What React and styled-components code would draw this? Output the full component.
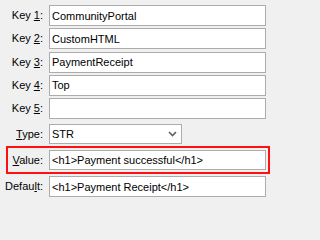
import React from 'react';
import styled, { createGlobalStyle } from 'styled-components';

const GlobalStyle = createGlobalStyle`
  html, body {
    margin: 0;
    padding: 0;
    background: #f0f0f0;
  }
  body {
    font-family: "Liberation Sans", Arial, sans-serif;
    font-size: 11px;
    color: #000;
  }
`;

const Form = styled.div`
  width: 271px;
  height: 202px;
  padding-top: 5px;
  box-sizing: border-box;
  display: flex;
  flex-direction: column;
  background: #f0f0f0;
`;

const Row = styled.div`
  display: grid;
  grid-template-columns: ${props => props.$labelWidth || 43}px 1fr;
  column-gap: 6px;
  align-items: center;
  margin-top: ${props => props.$mt || 0}px;
  padding-right: ${props => (props.$pr === undefined ? 5 : props.$pr)}px;
`;

const Label = styled.label`
  text-align: right;
  white-space: nowrap;
  line-height: 13px;
`;

const TextBox = styled.div`
  height: ${props => props.$h || 21}px;
  box-sizing: border-box;
  background: #fff;
  border: 1px solid #acacac;
  padding: 0 2px;
  display: flex;
  align-items: center;
  white-space: nowrap;
  overflow: hidden;
`;

const Combo = styled.div`
  width: 133px;
  height: 20px;
  box-sizing: border-box;
  background: #fff;
  border: 1px solid #acacac;
  padding: 0 4px 0 2px;
  display: flex;
  align-items: center;
  justify-content: space-between;
`;

const Highlight = styled.div`
  margin: 2px 1px 0 6px;
  border: 2px solid #ff1010;
  padding: 2px 2px 2px 0;
`;

const Chevron = () => (
  <svg width="9" height="6" viewBox="0 0 9 6">
    <polyline points="1,1 4.5,4.5 8,1" fill="none" stroke="#606060" strokeWidth="1.6" />
  </svg>
);

const keys = ['CommunityPortal', 'CustomHTML', 'PaymentReceipt', 'Top', ''];

const App = () => (
  <>
    <GlobalStyle />
    <Form>
      {keys.map((k, i) => (
        <Row key={i} $mt={i === 0 ? 0 : 2.25}>
          <Label>Key <u>{i + 1}</u>:</Label>
          <TextBox>{k}</TextBox>
        </Row>
      ))}
      <Row $mt={5}>
        <Label><u>T</u>ype:</Label>
        <Combo>
          <span>STR</span>
          <Chevron />
        </Combo>
      </Row>
      <Highlight>
        <Row $labelWidth={35} $pr={0}>
          <Label><u>V</u>alue:</Label>
          <TextBox $h={20}>&lt;h1&gt;Payment successful&lt;/h1&gt;</TextBox>
        </Row>
      </Highlight>
      <Row $mt={2}>
        <Label>Defau<u>l</u>t:</Label>
        <TextBox>&lt;h1&gt;Payment Receipt&lt;/h1&gt;</TextBox>
      </Row>
    </Form>
  </>
);

export default App;
